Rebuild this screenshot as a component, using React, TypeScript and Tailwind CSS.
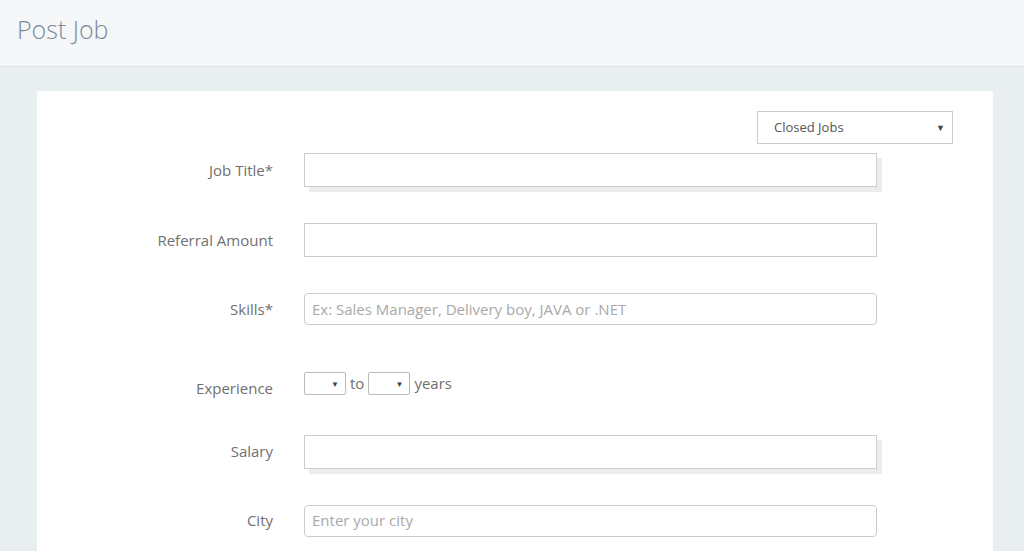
export default function App() {
  const labelCls =
    "w-[236px] shrink-0 text-right text-[15px] text-[#707070]";

  return (
    <div
      className="min-h-screen h-[551px] overflow-hidden bg-[#e9eef1]"
      style={{ fontFamily: '"Open Sans", "Liberation Sans", sans-serif' }}
    >
      {/* Header */}
      <div className="h-[67px] bg-[#f6f7f9] border-b border-[#dfe3e6] flex items-center px-[17px]">
        <h1 className="text-[25px] font-light text-[#7d8a97] leading-none -mt-[7px]">
          Post Job
        </h1>
      </div>

      {/* Card */}
      <div className="mx-[37px] mt-[24px] mr-[31px] bg-white pt-[20px] pb-10 h-[500px]">
        <div className="flex justify-end pr-[40px]">
          <div className="w-[196px] h-[33px] border border-[#cccccc] flex items-center justify-between pl-[16px] pr-[7px]">
            <span className="text-[13px] text-[#555]">Closed Jobs</span>
            <span className="text-[9px] text-[#444]">▼</span>
          </div>
        </div>

        {/* Job Title */}
        <div className="flex items-center gap-[31px] mt-[9px]">
          <label className={labelCls}>Job Title*</label>
          <div className="w-[573px] h-[34px] border border-[#cccccc] bg-white shadow-[5px_5px_0_#ececec]" />
        </div>

        {/* Referral */}
        <div className="flex items-center gap-[31px] mt-[36px]">
          <label className={labelCls}>Referral Amount</label>
          <div className="w-[573px] h-[34px] border border-[#cccccc] bg-white" />
        </div>

        {/* Skills */}
        <div className="flex items-center gap-[31px] mt-[36px]">
          <label className={labelCls}>Skills*</label>
          <div className="w-[573px] h-[32px] border border-[#cccccc] rounded-[4px] bg-white flex items-center px-[7px]">
            <span className="text-[15px] text-[#a9a9a9]">
              Ex: Sales Manager, Delivery boy, JAVA or .NET
            </span>
          </div>
        </div>

        {/* Experience */}
        <div className="flex items-start gap-[31px] mt-[47px]">
          <label className={labelCls + " mt-[5px]"}>Experience</label>
          <div className="flex items-center gap-[4px] text-[15px] text-[#707070]">
            <div className="w-[42px] h-[23px] border border-[#bbbbbb] rounded-[2px] flex items-center justify-end pr-[6px]">
              <span className="text-[8px] text-[#444]">▼</span>
            </div>
            <span>to</span>
            <div className="w-[42px] h-[23px] border border-[#bbbbbb] rounded-[2px] flex items-center justify-end pr-[6px]">
              <span className="text-[8px] text-[#444]">▼</span>
            </div>
            <span>years</span>
          </div>
        </div>

        {/* Salary */}
        <div className="flex items-center gap-[31px] mt-[35px]">
          <label className={labelCls}>Salary</label>
          <div className="w-[573px] h-[34px] border border-[#cccccc] bg-white shadow-[5px_5px_0_#ececec]" />
        </div>

        {/* City */}
        <div className="flex items-center gap-[31px] mt-[36px]">
          <label className={labelCls}>City</label>
          <div className="w-[573px] h-[32px] border border-[#cccccc] rounded-[4px] bg-white flex items-center px-[7px]">
            <span className="text-[15px] text-[#a9a9a9]">Enter your city</span>
          </div>
        </div>
      </div>
    </div>
  );
}
